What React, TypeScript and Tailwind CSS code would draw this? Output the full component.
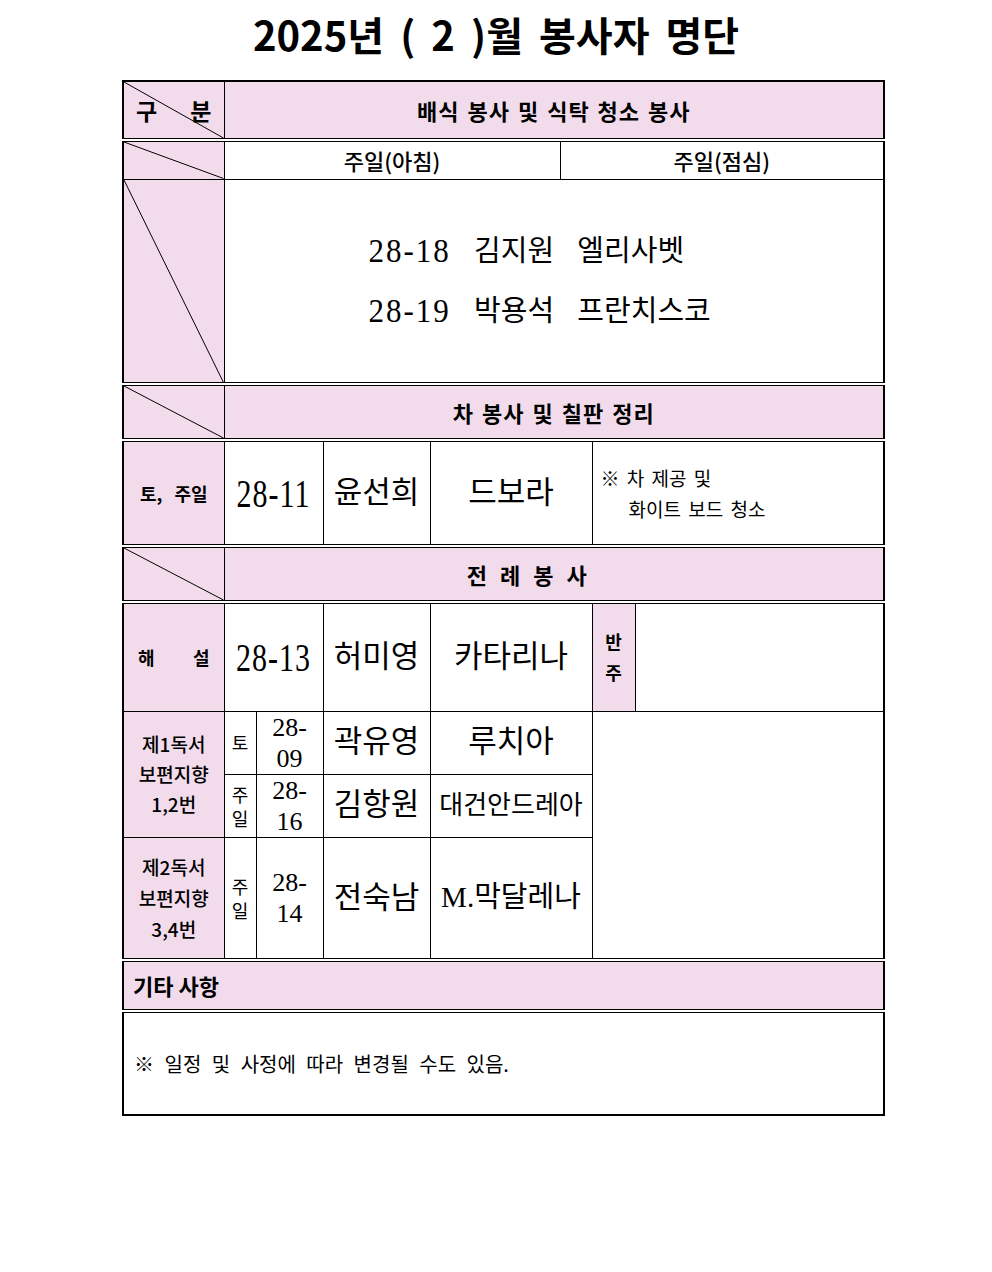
import React from "react";

// shared cell styles
const cell = "relative border border-black p-0 text-center align-middle";
const dbl = "border-b-4 border-double";
const pink = "bg-[#f2dcec]";
const gothic = "font-['Noto_Sans_CJK_KR',sans-serif]";
const serif = "font-['Liberation_Serif','Noto_Sans_CJK_KR',serif]";
const head = "text-[22px] font-bold tracking-[1px] [word-spacing:2px]";
const name = `text-[31px] ${serif}`;

function Diag() {
    return (
        <svg className="pointer-events-none absolute inset-0 h-full w-full" aria-hidden="true">
            <line x1="0" y1="0" x2="100%" y2="100%" stroke="#000" strokeWidth="1" />
        </svg>
    );
}

// tall serif digits like the batang numbers in the sheet
function Big({ children }: { children: React.ReactNode }) {
    return <span className="inline-block scale-y-[1.3] text-[30px] tracking-[1px]">{children}</span>;
}

function Stack({ lines, className }: { lines: string[]; className: string }) {
    return (
        <div className={className}>
            {lines.map((l) => (
                <div key={l}>{l}</div>
            ))}
        </div>
    );
}

export default function App() {
    return (
        <div className={`min-h-[1272px] bg-white text-black ${gothic}`}>
            <div className="flex h-[80px] items-center justify-center pb-[12px]">
                <h1 className="text-[40px] font-bold leading-none [word-spacing:7px]">
                    2025년 ( 2 )월 봉사자 명단
                </h1>
            </div>

            <div className="pl-[122px]">
                <table className="w-[761px] table-fixed border-collapse border-2 border-black">
                    <colgroup>
                        <col className="w-[101px]" />
                        <col className="w-[32px]" />
                        <col className="w-[67px]" />
                        <col className="w-[107px]" />
                        <col className="w-[130px]" />
                        <col className="w-[32px]" />
                        <col className="w-[43px]" />
                        <col className="w-[249px]" />
                    </colgroup>
                    <tbody>
                        {/* 구분 / 배식 봉사 */}
                        <tr className="h-[59px]">
                            <td className={`${cell} ${dbl} ${pink}`}>
                                <Diag />
                                <div className="relative flex justify-between px-[12px] text-[23px] font-bold">
                                    <span>구</span>
                                    <span>분</span>
                                </div>
                            </td>
                            <td colSpan={7} className={`${cell} ${dbl} ${pink} ${head}`}>
                                배식 봉사 및 식탁 청소 봉사
                            </td>
                        </tr>

                        <tr className="h-[39px]">
                            <td className={`${cell} ${pink}`}>
                                <Diag />
                            </td>
                            <td colSpan={4} className={`${cell} text-[22px] font-medium`}>
                                주일(아침)
                            </td>
                            <td colSpan={3} className={`${cell} text-[22px] font-medium`}>
                                주일(점심)
                            </td>
                        </tr>

                        <tr className="h-[205px]">
                            <td className={`${cell} ${dbl} ${pink}`}>
                                <Diag />
                            </td>
                            <td colSpan={7} className={`${cell} ${dbl}`}>
                                <div className={`pl-[144px] text-left text-[29px] leading-[60px] [word-spacing:16px] ${serif}`}>
                                    <div>
                                        <span className="inline-block scale-y-[1.1] text-[31px] tracking-[2px]">28-18</span> 김지원 엘리사벳
                                    </div>
                                    <div>
                                        <span className="inline-block scale-y-[1.1] text-[31px] tracking-[2px]">28-19</span> 박용석 프란치스코
                                    </div>
                                </div>
                            </td>
                        </tr>

                        {/* 차 봉사 */}
                        <tr className="h-[56px]">
                            <td className={`${cell} ${dbl} ${pink}`}>
                                <Diag />
                            </td>
                            <td colSpan={7} className={`${cell} ${dbl} ${pink} ${head}`}>
                                차 봉사 및 칠판 정리
                            </td>
                        </tr>

                        <tr className="h-[106px]">
                            <td className={`${cell} ${dbl} ${pink} text-[18px] font-bold [word-spacing:8px]`}>토, 주일</td>
                            <td colSpan={2} className={`${cell} ${dbl} ${serif}`}>
                                <Big>28-11</Big>
                            </td>
                            <td className={`${cell} ${dbl} ${name}`}>윤선희</td>
                            <td colSpan={2} className={`${cell} ${dbl} ${name}`}>드보라</td>
                            <td colSpan={2} className={`${cell} ${dbl} pl-[8px] text-left text-[19px] leading-[31px] [word-spacing:3px]`}>
                                <div>※ 차 제공 및</div>
                                <div className="pl-[28px]">화이트 보드 청소</div>
                            </td>
                        </tr>

                        {/* 전례 봉사 */}
                        <tr className="h-[56px]">
                            <td className={`${cell} ${dbl} ${pink}`}>
                                <Diag />
                            </td>
                            <td colSpan={7} className={`${cell} ${dbl} ${pink} pr-[54px] text-[22px] font-bold [word-spacing:8px]`}>
                                전 례 봉 사
                            </td>
                        </tr>

                        <tr className="h-[109px]">
                            <td className={`${cell} ${pink}`}>
                                <div className="flex justify-between px-[14px] text-[18px] font-bold">
                                    <span>해</span>
                                    <span>설</span>
                                </div>
                            </td>
                            <td colSpan={2} className={`${cell} ${serif}`}>
                                <Big>28-13</Big>
                            </td>
                            <td className={`${cell} ${name}`}>허미영</td>
                            <td colSpan={2} className={`${cell} ${name}`}>카타리나</td>
                            <td className={`${cell} ${pink}`}>
                                <Stack lines={["반", "주"]} className="text-[18px] font-bold leading-[31px]" />
                            </td>
                            <td className={cell}></td>
                        </tr>

                        {/* 제1독서 */}
                        <tr className="h-[62px]">
                            <td rowSpan={2} className={`${cell} ${pink}`}>
                                <Stack lines={["제1독서", "보편지향", "1,2번"]} className="text-[19px] font-medium leading-[30px]" />
                            </td>
                            <td className={`${cell} text-[18px]`}>토</td>
                            <td className={cell}>
                                <Stack lines={["28-", "09"]} className={`text-[26px] leading-[31px] ${serif}`} />
                            </td>
                            <td className={`${cell} ${name}`}>곽유영</td>
                            <td colSpan={2} className={`${cell} ${name}`}>루치아</td>
                            <td colSpan={2} rowSpan={3} className={`${cell} ${dbl}`}></td>
                        </tr>

                        <tr className="h-[62px]">
                            <td className={cell}>
                                <Stack lines={["주", "일"]} className="text-[18px] leading-[24px]" />
                            </td>
                            <td className={cell}>
                                <Stack lines={["28-", "16"]} className={`text-[26px] leading-[31px] ${serif}`} />
                            </td>
                            <td className={`${cell} ${name}`}>김항원</td>
                            <td colSpan={2} className={`${cell} text-[26px] ${serif}`}>대건안드레아</td>
                        </tr>

                        {/* 제2독서 */}
                        <tr className="h-[123px]">
                            <td className={`${cell} ${dbl} ${pink}`}>
                                <Stack lines={["제2독서", "보편지향", "3,4번"]} className="text-[19px] font-medium leading-[31px]" />
                            </td>
                            <td className={`${cell} ${dbl}`}>
                                <Stack lines={["주", "일"]} className="text-[18px] leading-[24px]" />
                            </td>
                            <td className={`${cell} ${dbl}`}>
                                <Stack lines={["28-", "14"]} className={`text-[26px] leading-[31px] ${serif}`} />
                            </td>
                            <td className={`${cell} ${dbl} ${name}`}>전숙남</td>
                            <td colSpan={2} className={`${cell} ${dbl} text-[29px] ${serif}`}>M.막달레나</td>
                        </tr>

                        {/* 기타 사항 */}
                        <tr className="h-[51px]">
                            <td colSpan={8} className={`${cell} ${dbl} ${pink} pl-[9px] text-left text-[22px] font-bold`}>
                                기타 사항
                            </td>
                        </tr>

                        <tr className="h-[104px]">
                            <td colSpan={8} className={`${cell} pl-[10px] text-left text-[20px] [word-spacing:6px]`}>
                                ※ 일정 및 사정에 따라 변경될 수도 있음.
                            </td>
                        </tr>
                    </tbody>
                </table>
            </div>
        </div>
    );
}
